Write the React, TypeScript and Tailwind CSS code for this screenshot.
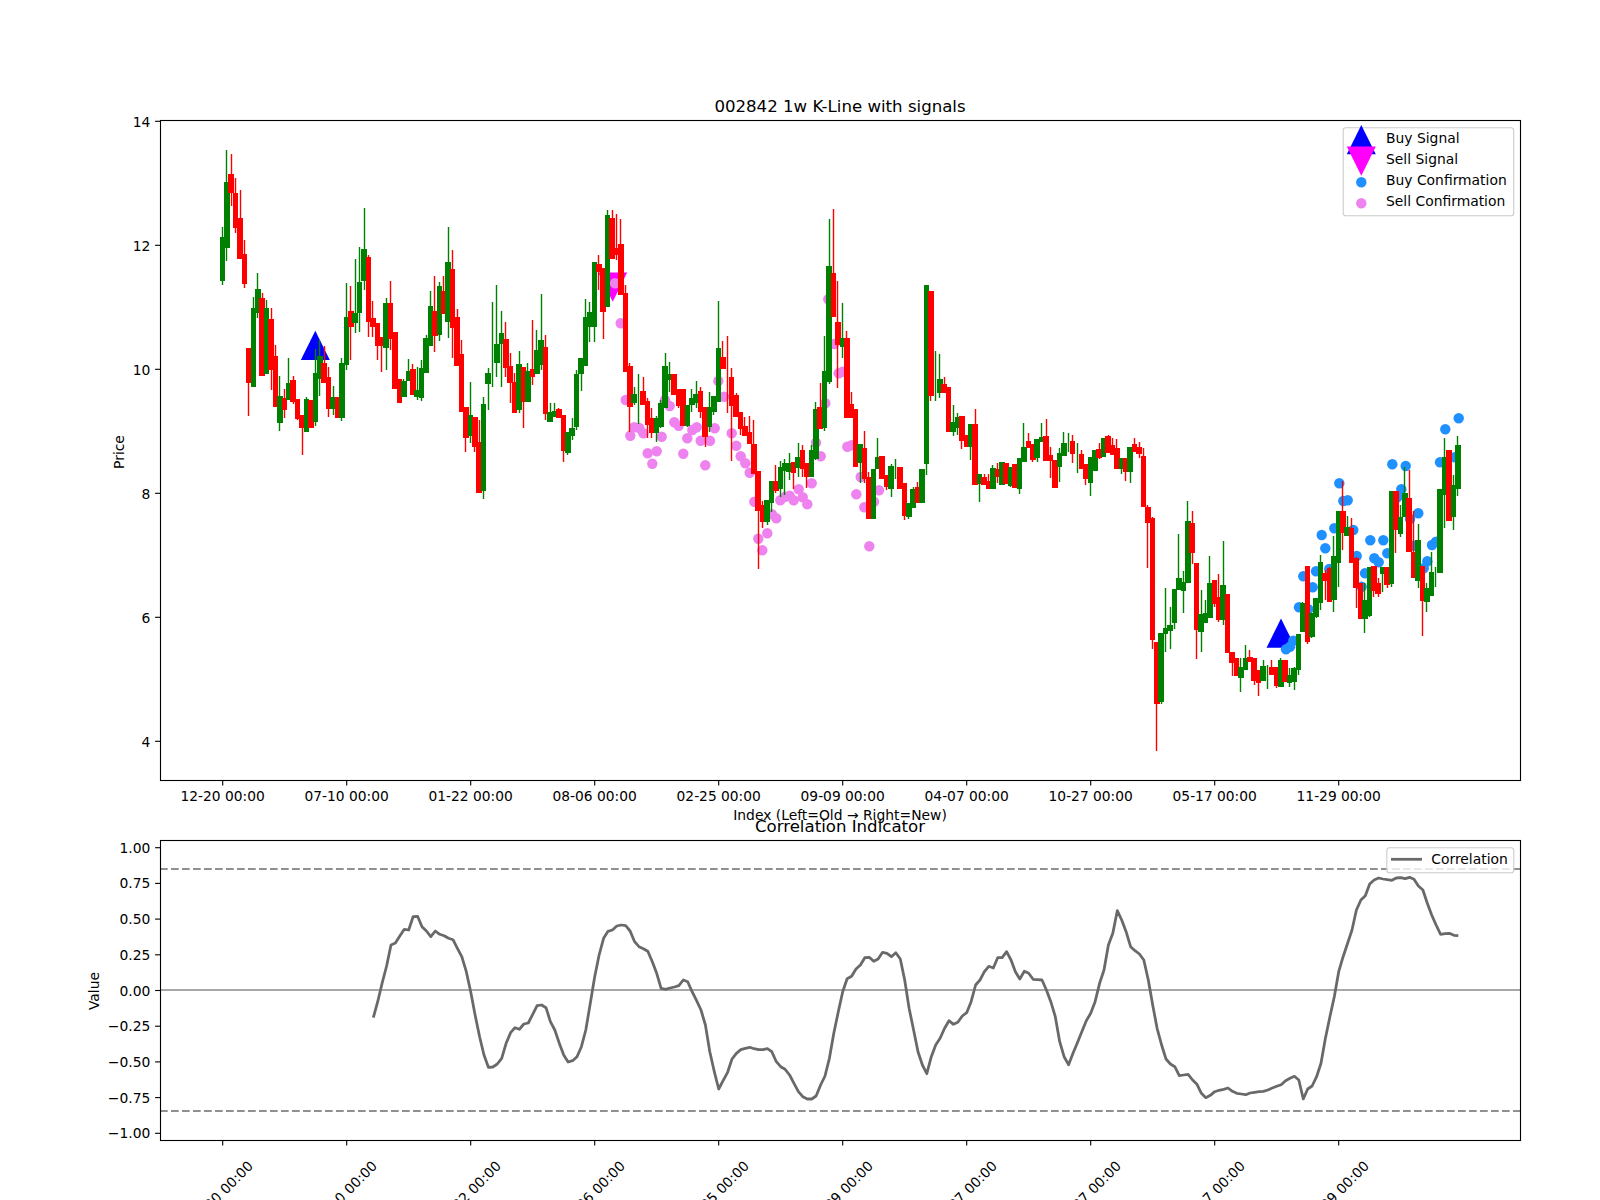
type Candle = ['g' | 'r', number, number, number, number];

// one row per bar, page pixels: colour, body top, body bottom, wick top, wick bottom
const CANDLES: Candle[] = [
  ['g',237,281,227,285],['g',182,248,150,261],['r',174,193,154,206],['r',193,228,178,233],['r',218,259,190,259],
  ['r',254,284,240,288],['r',348,383,348,416],['g',308,387,297,387],['g',289,313,273,318],['r',298,376,293,376],
  ['g',308,374,300,374],['r',319,370,308,390],['r',356,407,345,407],['g',396,423,376,431],['r',398,410,389,418],
  ['g',383,400,358,400],['r',380,402,376,404],['r',399,419,399,420],['r',415,428,415,455],['g',399,432,397,432],
  ['r',400,428,400,428],['g',373,422,349,426],['g',356,379,340,396],['r',363,383,346,383],['r',377,409,367,417],
  ['g',397,409,386,415],['r',397,418,397,418],['g',363,418,358,421],['g',317,365,283,370],['r',311,327,286,360],
  ['g',313,323,259,333],['g',282,313,247,332],['g',249,281,208,290],['r',257,322,255,337],['r',318,327,301,337],
  ['r',323,346,323,360],['r',337,346,337,372],['g',303,348,298,370],['r',303,339,281,350],['r',332,389,332,389],
  ['r',379,403,379,403],['g',381,397,379,397],['g',371,381,359,381],['r',369,395,364,395],['g',390,397,367,400],
  ['g',368,398,360,401],['g',338,373,335,373],['g',306,346,291,346],['r',311,336,276,352],['g',286,335,282,341],
  ['r',291,314,276,314],['g',262,322,227,338],['r',269,328,250,358],['r',317,366,309,366],['r',354,412,340,412],
  ['r',407,438,407,452],['g',415,436,382,443],['r',417,447,417,452],['r',442,493,420,493],['g',404,491,397,499],
  ['g',373,384,368,410],['g',342,342,302,387],['g',344,363,285,377],['g',333,344,311,387],['r',339,368,322,377],
  ['r',366,383,353,403],['r',382,413,373,413],['g',364,410,351,413],['r',367,402,367,428],['g',371,402,363,402],
  ['r',369,377,320,385],['g',350,374,330,374],['g',340,365,294,370],['r',347,414,335,420],['g',412,422,403,422],
  ['g',411,417,403,417],['r',409,418,408,418],['r',415,451,415,462],['g',432,453,432,455],['g',428,436,418,440],
  ['g',374,427,370,430],['g',358,374,358,391],['g',317,366,299,366],['g',312,327,302,342],['g',262,327,262,342],
  ['r',264,272,255,290],['r',268,312,268,339],['g',215,307,210,307],['r',218,259,210,259],['r',248,255,214,260],
  ['r',244,295,219,295],['r',293,372,285,372],['r',366,407,363,432],['g',394,403,387,405],['g',400,400,374,424],
  ['r',391,405,377,405],['r',401,425,398,438],['r',418,433,408,438],['g',418,433,416,442],['g',403,427,400,428],
  ['g',366,408,353,408],['g',374,380,362,392],['r',374,395,374,395],['r',389,406,389,408],['r',389,426,389,426],
  ['g',405,426,405,427],['g',398,405,389,412],['g',394,403,381,408],['r',391,412,387,418],['r',407,437,407,447],
  ['g',407,427,392,432],['g',396,412,396,415],['g',348,402,301,402],['r',357,369,341,369],['r',375,375,336,413],
  ['r',377,406,368,461],['r',395,417,393,417],['r',412,429,412,435],['r',426,436,417,436],['r',432,444,416,444],
  ['r',444,474,420,474],['r',471,511,471,569],['r',505,522,501,528],['g',500,522,500,525],['g',481,503,481,512],
  ['r',481,491,465,493],['g',467,489,461,497],['g',463,471,459,495],['g',463,472,453,480],['r',462,473,462,489],
  ['g',457,468,443,477],['r',450,469,445,477],['r',463,477,463,488],['g',450,477,445,477],['g',409,459,402,460],
  ['r',407,429,383,429],['g',371,428,336,431],['g',266,382,219,384],['r',273,317,209,317],['r',322,345,281,388],
  ['g',338,347,303,358],['r',338,418,331,418],['r',404,418,392,418],['r',409,467,409,467],['g',444,463,444,483],
  ['r',448,479,431,483],['r',477,519,472,519],['g',469,519,469,519],['g',457,469,438,469],['r',456,479,456,479],
  ['r',475,487,475,490],['g',466,489,464,497],['g',470,470,459,479],['r',467,489,467,489],['r',483,516,483,520],
  ['g',503,517,503,519],['g',489,508,487,508],['r',487,503,482,503],['g',469,503,469,503],['g',285,464,285,475],
  ['r',291,396,291,401],['g',375,375,351,401],['g',379,393,354,398],['r',384,393,377,393],['r',387,432,387,432],
  ['g',422,432,405,436],['g',417,428,413,435],['r',416,441,416,449],['r',435,447,435,447],['g',424,447,424,460],
  ['r',424,485,409,485],['g',474,484,474,502],['r',477,485,474,485],['r',481,489,474,489],['g',468,489,465,489],
  ['r',469,477,463,483],['g',462,485,462,485],['r',463,484,463,484],['g',467,486,467,487],['r',464,488,464,488],
  ['g',458,489,458,494],['g',447,462,423,462],['r',441,448,433,448],['r',444,460,444,462],['g',439,458,439,462],
  ['g',437,442,423,442],['r',436,461,419,461],['r',455,461,447,478],['r',460,488,460,488],['g',453,467,448,482],
  ['g',443,456,432,456],['g',445,445,433,452],['r',441,454,435,463],['g',458,458,443,473],['r',454,469,450,469],
  ['r',464,479,464,485],['g',457,483,457,496],['g',450,471,450,471],['r',449,458,443,459],['g',438,457,438,457],
  ['r',436,453,435,453],['r',445,455,438,455],['r',448,469,439,469],['g',458,469,458,474],['r',458,472,458,481],
  ['g',447,472,447,483],['r',444,452,438,452],['r',447,454,442,458],['r',456,507,448,507],['r',507,523,505,568],
  ['r',518,640,517,649],['r',642,704,642,751],['g',633,702,633,704],['g',628,634,588,652],['g',625,631,607,649],
  ['g',589,623,589,629],['g',578,590,534,590],['g',582,591,571,613],['g',521,583,501,583],['r',523,553,511,564],
  ['r',563,630,563,659],['g',614,632,590,652],['g',613,623,600,623],['g',583,618,556,618],['r',580,604,580,607],
  ['r',597,620,574,622],['g',585,620,541,625],['r',594,653,594,653],['r',652,663,652,676],['r',658,676,658,676],
  ['g',667,678,658,692],['g',658,670,645,670],['r',657,662,650,662],['r',658,681,658,685],['r',670,683,670,696],
  ['g',666,681,660,681],['g',670,670,665,689],['r',667,675,660,675],['r',667,686,667,688],['g',660,687,658,687],
  ['r',660,682,660,682],['g',675,683,668,687],['g',668,682,667,690],['g',634,670,634,675],['g',603,632,602,632],
  ['r',566,642,566,644],['g',613,637,613,638],['g',598,617,598,618],['g',562,603,555,610],['r',573,581,570,600],
  ['r',568,602,567,602],['g',556,600,536,612],['g',511,563,511,587],['r',511,533,481,550],['g',527,536,516,536],
  ['r',528,563,518,563],['r',558,588,557,608],['r',583,619,583,619],['g',600,619,583,633],['g',567,616,567,617],
  ['r',566,591,566,597],['r',583,594,578,597],['g',567,574,567,592],['r',567,585,567,588],['g',491,584,491,587],
  ['r',491,530,491,553],['g',517,534,505,537],['g',493,517,467,517],['r',498,552,470,552],['r',552,578,511,578],
  ['g',540,581,524,588],['r',566,601,566,636],['g',588,602,583,612],['g',572,596,552,596],['g',575,575,567,587],
  ['g',489,573,489,573],['g',457,495,438,528],['r',450,521,450,521],['g',485,517,475,530],['g',445,489,436,496],
];

const SELL_DOTS = [
  [625.7,400],[630.3,435.7],[634.3,427.3],[639.3,428],[643.3,433.3],[647.7,453.3],[652.3,463.7],[656.7,451.3],
  [661.7,436.7],[665,400],[669.7,406],[674.3,422.3],[678.7,425.7],[683.3,453.7],[687.3,438.3],[692.3,430],
  [696.7,427.3],[700.7,440.7],[705.3,465.3],[710,440.7],[714.7,428.3],[718.3,381],[724,396.7],[731.7,433.3],
  [736.3,445.7],[740.7,456.3],[745.3,463.3],[749.7,472.7],[754.3,501.7],[758.3,538.7],[762.3,550.3],[767.3,533.3],
  [772,514.3],[776.3,518.3],[780.3,500.3],[785.3,496.7],[789.7,495.7],[793.7,500.3],[798.7,489.3],[802.7,497.3],
  [807.3,504.3],[811.7,483.3],[816,442.7],[820.7,456.3],[825.3,403.3],[838.7,373.3],[842.7,371.7],[847.3,446.7],
  [851.7,445.3],[860.7,477],[856.3,494.3],[864.3,507.3],[869.3,546.3],[874,501.7],[879,490.3],[620.7,323.3],
  [615,283.3],[828.3,299.3],[834.3,344],
];

const BUY_DOTS = [
  [1458.7,418.3],[1445.3,429.3],[1440,462.3],[1454.7,457.3],[1392.3,464.3],[1405.7,466],[1339.3,483.3],[1343.3,501],
  [1347.7,500.3],[1401.3,489.3],[1397.3,497.3],[1418.3,513.3],[1410,519],[1321.7,535],[1334.3,528.3],[1353.3,530],
  [1325.3,548.3],[1370.3,540.3],[1383.3,540.3],[1356.7,556],[1387.3,553.3],[1374.3,558.3],[1378.7,562.3],[1413.3,545.7],
  [1432,545],[1436,541.7],[1427.3,561.3],[1423.7,568.3],[1365,573.3],[1329.3,569],[1316,571.3],[1303.3,576.3],
  [1312.7,587.3],[1361.7,586.7],[1299,607.3],[1308.3,609.3],[1293.3,640.7],[1290,646.7],[1286,649.3],
];

// correlation line, starts at bar 34, (y - 760) * 3
const CORR_START = 34;
const CORR = [
  773,725,670,618,555,549,528,508,510,470,469,500,513,530,513,523,527,535,539,565,590,635,695,765,830,885,922,921,912,895,
  850,818,803,808,792,789,763,737,735,743,785,810,850,885,906,902,890,860,810,730,650,585,
  535,514,510,498,495,497,513,545,560,566,574,605,640,685,688,684,681,677,660,665,695,722,750,795,875,935,987,962,937,897,
  880,869,865,862,866,869,869,866,875,905,920,928,945,970,995,1010,1017,1017,1008,975,948,895,820,755,695,656,649,627,615,
  593,592,604,597,577,580,590,578,597,660,745,810,875,915,941,890,855,835,805,782,793,787,768,758,725,675,660,635,619,624,
  593,593,575,600,635,657,634,640,658,659,660,690,725,770,845,890,914,880,848,815,782,760,725,670,
  630,555,520,452,480,515,560,572,582,600,660,735,805,855,897,912,920,947,945,943,960,973,1000,1013,1006,995,991,988,984,
  994,1000,1002,1004,999,997,995,994,990,984,979,974,962,955,949,960,1017,987,978,950,910,835,770,710,635,590,550,510,450,
  420,407,372,360,354,357,359,361,354,353,356,352,358,378,390,430,465,495,523,521,520,526,527,
];

const DATE_TICKS = ['12-20 00:00','07-10 00:00','01-22 00:00','08-06 00:00','02-25 00:00','09-09 00:00','04-07 00:00','10-27 00:00','05-17 00:00','11-29 00:00'];
const PRICE_TICKS = [14, 12, 10, 8, 6, 4];
const VALUE_TICKS = ['1.00','0.75','0.50','0.25','0.00','−0.25','−0.50','−0.75','−1.00'];

const barX = (i: number) => 222.7 + 4.4286 * i;
const tickX = (i: number) => barX(i * 28);

function Triangle({ x, y, up, color }: { x: number; y: number; up: boolean; color: string }) {
  const pts = up
    ? `${x - 14.5},${y + 29.3} ${x + 14.5},${y + 29.3} ${x},${y}`
    : `${x - 14.5},${y} ${x + 14.5},${y} ${x},${y + 29.3}`;
  return <polygon points={pts} fill={color} />;
}

function Frame({ top, bottom }: { top: number; bottom: number }) {
  return <rect x={160.5} y={top + 0.5} width={1360} height={bottom - top} fill="none" stroke="#000" strokeWidth={1.11} />;
}

function PriceChart() {
  return (
    <svg viewBox="0 0 1600 810" className="block w-[1600px] h-[810px] shrink-0 overflow-visible">
      <Triangle x={315.3} y={330.7} up color="#0000ff" />
      <Triangle x={1281} y={618.5} up color="#0000ff" />
      <Triangle x={612.7} y={272.5} up={false} color="#ff00ff" />
      {SELL_DOTS.map(([x, y], i) => <circle key={i} cx={x} cy={y} r={5.2} fill="#ee82ee" />)}
      {BUY_DOTS.map(([x, y], i) => <circle key={i} cx={x} cy={y} r={5.2} fill="#1e90ff" />)}
      {CANDLES.map(([c, top, bot, wickTop, wickBot], i) => {
        const fill = c === 'g' ? '#008000' : '#ff0000';
        // wicks sit on a pixel centre, like the snapped lines of the plot
        const wickX = Math.floor(barX(i) - 0.4) + 0.5;
        return (
          <g key={i} fill={fill}>
            <rect x={wickX - 0.7} y={wickTop} width={1.4} height={wickBot - wickTop} />
            {bot > top && <rect x={barX(i) - 3.2} y={top} width={5.6} height={bot - top} shapeRendering="crispEdges" />}
          </g>
        );
      })}
      <Frame top={120} bottom={780} />
      {PRICE_TICKS.map((p, i) => {
        const y = 121.3 + i * 124;
        return (
          <g key={p}>
            <line x1={155.1} x2={160} y1={y} y2={y} stroke="#000" strokeWidth={1.11} />
            <text x={150.3} y={y + 5.8} textAnchor="end" className="text-[13.89px]">{p}</text>
          </g>
        );
      })}
      {DATE_TICKS.map((d, i) => (
        <g key={d}>
          <line x1={tickX(i)} x2={tickX(i)} y1={780.5} y2={785.4} stroke="#000" strokeWidth={1.11} />
          <text x={tickX(i)} y={800.7} textAnchor="middle" className="text-[13.8px]">{d}</text>
        </g>
      ))}
      <text x={840} y={111.7} textAnchor="middle" className="text-[16.6px]">002842 1w K-Line with signals</text>
      <text x={840} y={820.3} textAnchor="middle" className="text-[13.89px]">Index (Left=Old → Right=New)</text>
      <text transform="rotate(-90 124 452)" x={124} y={452} textAnchor="middle" className="text-[13.89px]">Price</text>

      <rect x={1343.2} y={127.8} width={170.5} height={88} rx={2.8} fill="#ffffff" fillOpacity={0.8} stroke="#cccccc" strokeWidth={1.11} />
      <Triangle x={1361.3} y={125} up color="#0000ff" />
      <Triangle x={1361.3} y={146.5} up={false} color="#ff00ff" />
      <circle cx={1361.3} cy={182.3} r={5.2} fill="#1e90ff" />
      <circle cx={1361.3} cy={203.3} r={5.2} fill="#ee82ee" />
      <text x={1386} y={143} className="text-[13.89px]">Buy Signal</text>
      <text x={1386} y={164} className="text-[13.89px]">Sell Signal</text>
      <text x={1386} y={185} className="text-[13.89px]">Buy Confirmation</text>
      <text x={1386} y={206} className="text-[13.89px]">Sell Confirmation</text>
    </svg>
  );
}

function CorrelationChart() {
  const pts = CORR.map((z, i) => `${barX(CORR_START + i).toFixed(1)},${(760 + z / 3).toFixed(1)}`).join(' ');
  return (
    <svg viewBox="0 810 1600 390" className="block w-[1600px] h-[390px] shrink-0 overflow-visible">
      <line x1={160} x2={1520} y1={869} y2={869} stroke="#909090" strokeWidth={2.08} strokeDasharray="7.7 3.3" />
      <line x1={160} x2={1520} y1={1111} y2={1111} stroke="#909090" strokeWidth={2.08} strokeDasharray="7.7 3.3" />
      <line x1={160} x2={1520} y1={990} y2={990} stroke="#a8a8a8" strokeWidth={2.08} />
      <polyline points={pts} fill="none" stroke="#696969" strokeWidth={2.78} strokeLinejoin="round" />
      <Frame top={840} bottom={1140} />
      {VALUE_TICKS.map((v, i) => {
        const y = 847.7 + i * 35.7;
        return (
          <g key={v}>
            <line x1={155.1} x2={160} y1={y} y2={y} stroke="#000" strokeWidth={1.11} />
            <text x={150.3} y={y + 5} textAnchor="end" className="text-[13.89px]">{v}</text>
          </g>
        );
      })}
      {DATE_TICKS.map((d, i) => (
        <g key={d}>
          <line x1={tickX(i)} x2={tickX(i)} y1={1140.5} y2={1145.4} stroke="#000" strokeWidth={1.11} />
          <text
            transform={`rotate(-45 ${tickX(i) - 2} 1193)`}
            x={tickX(i) - 2}
            y={1198}
            textAnchor="middle"
            className="text-[13.8px]"
          >
            {d}
          </text>
        </g>
      ))}
      <text x={840} y={831.7} textAnchor="middle" className="text-[16.6px]">Correlation Indicator</text>
      <text transform="rotate(-90 98.5 991)" x={98.5} y={991} textAnchor="middle" className="text-[13.89px]">Value</text>

      <rect x={1386.8} y={847.8} width={127} height={25} rx={2.8} fill="#ffffff" fillOpacity={0.8} stroke="#cccccc" strokeWidth={1.11} />
      <line x1={1391} x2={1422} y1={859.3} y2={859.3} stroke="#696969" strokeWidth={2.78} />
      <text x={1431.3} y={864.3} className="text-[13.89px]">Correlation</text>
    </svg>
  );
}

export default function App() {
  return (
    <div className="flex flex-col w-[1600px] h-[1200px] overflow-hidden bg-white text-black font-['DejaVu_Sans',sans-serif]">
      <PriceChart />
      <CorrelationChart />
    </div>
  );
}
